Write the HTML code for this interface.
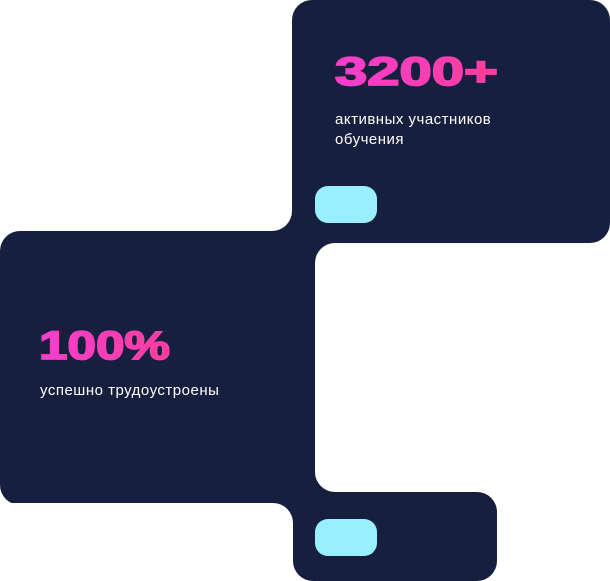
<!DOCTYPE html>
<html><head><meta charset="utf-8"><style>
html,body{margin:0;padding:0;background:#fff;width:610px;height:581px;overflow:hidden;position:relative;font-family:"Liberation Sans",sans-serif}
div{position:absolute}
.d{background:#161F3E}
.w{background:#fff}
.pill{background:#99EEFF;border-radius:13px;width:62px;height:37px}
.num{font-weight:bold;font-size:40px;line-height:40px;background:linear-gradient(90deg,#F23FE0,#FF3D86);-webkit-background-clip:text;background-clip:text;color:transparent;-webkit-text-stroke:1.6px #FA3EB8;transform-origin:left top;letter-spacing:0px;white-space:nowrap}
.t{color:#fff;font-size:15px;line-height:20px;letter-spacing:0.5px;white-space:nowrap}
</style></head><body>
<div class="d" style="left:292px;top:0;width:318px;height:243px;border-radius:20px"></div>
<div class="d" style="left:0;top:231px;width:315px;height:274px;border-radius:20px"></div>
<div class="d" style="left:293px;top:492px;width:204px;height:89px;border-radius:20px"></div>
<div class="d" style="left:260px;top:200px;width:80px;height:70px"></div>
<div class="d" style="left:260px;top:470px;width:80px;height:60px"></div>
<div class="w" style="left:315px;top:243px;width:295px;height:249px;border-radius:20px 0 0 20px"></div>
<div class="w" style="left:0;top:0;width:292px;height:231px;border-radius:0 0 20px 0"></div>
<div class="w" style="left:0;top:503px;width:293px;height:78px;border-radius:0 20px 0 0"></div>
<div class="pill" style="left:315px;top:186px"></div>
<div class="pill" style="left:315px;top:519px"></div>
<div class="num" style="left:335px;top:52px;transform:scaleX(1.45)">3200+</div>
<div class="t" style="left:335px;top:110px">активных участников<br>обучения</div>
<div class="num" style="left:39px;top:326px;transform:scaleX(1.28)">100%</div>
<div class="t" style="left:40px;top:381px">успешно трудоустроены</div>
</body></html>
